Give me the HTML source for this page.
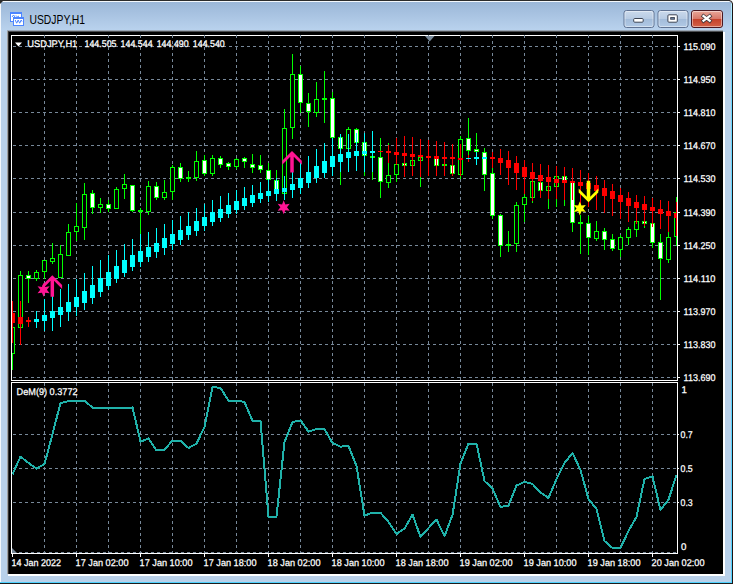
<!DOCTYPE html>
<html><head><meta charset="utf-8"><title>USDJPY,H1</title>
<style>html,body{margin:0;padding:0;background:#fff;overflow:hidden}body{width:735px;height:584px;position:relative;font-family:"Liberation Sans",sans-serif}svg text{font-family:"Liberation Sans",sans-serif}</style></head>
<body>
<svg width="735" height="584" viewBox="0 0 735 584" style="display:block;position:absolute;left:0;top:0">
<defs>
<linearGradient id="tb" x1="0" y1="0" x2="0" y2="1"><stop offset="0" stop-color="#9ab6d7"/><stop offset="1" stop-color="#bad3ee"/></linearGradient>
<linearGradient id="bt" x1="0" y1="0" x2="0" y2="1"><stop offset="0" stop-color="#cbdaec"/><stop offset="0.48" stop-color="#b7cbe3"/><stop offset="0.52" stop-color="#a3bcda"/><stop offset="1" stop-color="#b2cae6"/></linearGradient>
<linearGradient id="cl" x1="0" y1="0" x2="0" y2="1"><stop offset="0" stop-color="#e9a99b"/><stop offset="0.48" stop-color="#d8796a"/><stop offset="0.52" stop-color="#c5422b"/><stop offset="1" stop-color="#d4634a"/></linearGradient>
<linearGradient id="gl" x1="0" y1="0" x2="0" y2="1"><stop offset="0" stop-color="#b9d1ea"/><stop offset="0.4" stop-color="#8a8f96"/><stop offset="1" stop-color="#202020"/></linearGradient>
<linearGradient id="cy" x1="0" y1="0" x2="0" y2="1"><stop offset="0" stop-color="#b8eeff"/><stop offset="0.08" stop-color="#6cd8ff"/><stop offset="1" stop-color="#4fd2ff"/></linearGradient>
<clipPath id="cm"><rect x="12" y="36" width="665" height="344"/></clipPath>
<clipPath id="cs"><rect x="12" y="383" width="665" height="170"/></clipPath>
</defs>
<g shape-rendering="crispEdges">
<rect x="0" y="0" width="735" height="584" fill="#ffffff"/>
<rect x="0" y="0" width="733" height="1" fill="#2b2b2b"/>
<rect x="732" y="0" width="1" height="584" fill="#1c1414"/>
<rect x="0" y="583" width="733" height="1" fill="#1c1c1c"/>
<rect x="731" y="2" width="1" height="581" fill="url(#cy)"/>
<rect x="0" y="582" width="732" height="1" fill="#4fd2ff"/>
<rect x="0" y="1" width="731" height="581" fill="#b9d1ea"/>
<rect x="0" y="1" width="731" height="30" fill="url(#tb)"/>
<rect x="1" y="1" width="730" height="1" fill="#f4f8fc"/>
<rect x="0" y="2" width="1" height="580" fill="#f4f8fc"/>
<rect x="723" y="32" width="2" height="544" fill="#ffffff"/>
<rect x="8" y="574" width="717" height="2" fill="#ffffff"/>
<rect x="7" y="30" width="716" height="2" fill="url(#gl)"/>
<rect x="7" y="31" width="1" height="543" fill="#a0a0a0"/>
<rect x="8" y="31" width="1" height="543" fill="#404040"/>
<rect x="9" y="32" width="714" height="542" fill="#000000"/>
<rect x="8" y="32" width="1" height="542" fill="#303030"/>
</g>
<path d="M0 0H4L0 4Z" fill="#2b2b2b"/>
<path d="M733 0H729L733 4Z" fill="#2b2b2b"/>
<path d="M733 0h2v584h-2z" fill="#ffffff" shape-rendering="crispEdges"/>
<path d="M729 0H735V5H733V4Z" fill="#ffffff"/>
<path d="M729 0.5Q732.5 0.5 732.5 4" stroke="#1c1414" fill="none"/>
<g shape-rendering="crispEdges">
<rect x="10" y="12" width="12" height="10" fill="#4d86ff"/><rect x="11" y="14" width="10" height="7" fill="#ffffff"/>
<rect x="13" y="17" width="11" height="9" fill="#4d86ff"/><rect x="14" y="19" width="9" height="6" fill="#ffffff"/>
</g>
<path d="M12 17l1.5-2 1.5 2M16 15.5l1.5 1.5 1.5-1" stroke="#4d86ff" fill="none" stroke-width="1"/>
<path d="M15.200 20l1.500 3.200 1.500-3.200 1.500 3.200 1.500-3.200 0.800 1.600" stroke="#4d86ff" fill="none" stroke-width="1"/>
<text x="29.5" y="23.8" font-size="12" fill="#000" textLength="55.6" lengthAdjust="spacingAndGlyphs">USDJPY,H1</text>
<rect x="624" y="10.5" width="30" height="17" rx="2.5" ry="2.5" fill="url(#bt)" stroke="#5f7292"/>
<rect x="625" y="11.5" width="28" height="15" rx="1.5" ry="1.5" fill="none" stroke="#ffffff" stroke-opacity="0.45"/>
<rect x="658" y="10.5" width="30" height="17" rx="2.5" ry="2.5" fill="url(#bt)" stroke="#5f7292"/>
<rect x="659" y="11.5" width="28" height="15" rx="1.5" ry="1.5" fill="none" stroke="#ffffff" stroke-opacity="0.45"/>
<rect x="691.5" y="10.5" width="31" height="17" rx="2.5" ry="2.5" fill="url(#cl)" stroke="#4a1822"/>
<rect x="692.5" y="11.5" width="29" height="15" rx="1.5" ry="1.5" fill="none" stroke="#ffffff" stroke-opacity="0.45"/>
<rect x="633.7" y="18.500" width="9.500" height="3.700" rx="1" fill="#ffffff" stroke="#3c4454"/>
<rect x="667.900" y="14.800" width="9.400" height="7.400" rx="1" fill="#ffffff" stroke="#3c4454"/>
<rect x="670.7" y="17.600" width="3.700" height="1.600" fill="#7f9cc4" stroke="#3c4454" stroke-width="1"/>
<path d="M702.000 14.900L711.200 21.900M711.200 14.900L702.000 21.900" stroke="#43383c" stroke-width="3.800" fill="none"/>
<path d="M702.600 15.350L710.600 21.450M710.600 15.350L702.600 21.450" stroke="#ffffff" stroke-width="2.300" fill="none"/>
<g shape-rendering="crispEdges" fill="#ffffff">
<rect x="11" y="35" width="667" height="1"/>
<rect x="11" y="380" width="667" height="1"/>
<rect x="11" y="35" width="1" height="346"/>
<rect x="677" y="35" width="1" height="346"/>
<rect x="11" y="382" width="667" height="1"/>
<rect x="11" y="553" width="667" height="1"/>
<rect x="11" y="382" width="1" height="172"/>
<rect x="677" y="382" width="1" height="172"/>
<rect x="678" y="46" width="2" height="1"/>
<rect x="678" y="79" width="2" height="1"/>
<rect x="678" y="112" width="2" height="1"/>
<rect x="678" y="145" width="2" height="1"/>
<rect x="678" y="178" width="2" height="1"/>
<rect x="678" y="212" width="2" height="1"/>
<rect x="678" y="245" width="2" height="1"/>
<rect x="678" y="278" width="2" height="1"/>
<rect x="678" y="311" width="2" height="1"/>
<rect x="678" y="344" width="2" height="1"/>
<rect x="678" y="377" width="2" height="1"/>
<rect x="678" y="434" width="1" height="1"/>
<rect x="678" y="468" width="1" height="1"/>
<rect x="678" y="502" width="1" height="1"/>
<rect x="12" y="554" width="1" height="3"/>
<rect x="76" y="554" width="1" height="3"/>
<rect x="140" y="554" width="1" height="3"/>
<rect x="204" y="554" width="1" height="3"/>
<rect x="268" y="554" width="1" height="3"/>
<rect x="332" y="554" width="1" height="3"/>
<rect x="396" y="554" width="1" height="3"/>
<rect x="460" y="554" width="1" height="3"/>
<rect x="524" y="554" width="1" height="3"/>
<rect x="588" y="554" width="1" height="3"/>
<rect x="652" y="554" width="1" height="3"/>
</g>
<g shape-rendering="crispEdges" stroke="#778899" stroke-width="1" stroke-dasharray="3 3" fill="none">
<path d="M13 46.5H677"/>
<path d="M13 79.5H677"/>
<path d="M13 112.5H677"/>
<path d="M13 145.5H677"/>
<path d="M13 178.5H677"/>
<path d="M13 212.5H677"/>
<path d="M13 245.5H677"/>
<path d="M13 278.5H677"/>
<path d="M13 311.5H677"/>
<path d="M13 344.5H677"/>
<path d="M13 377.5H677"/>
<path d="M13 434.5H677"/>
<path d="M13 468.5H677"/>
<path d="M13 502.5H677"/>
<path d="M13 552.5H677"/>
<path d="M44.5 35V380"/>
<path d="M44.5 383V553"/>
<path d="M76.5 35V380"/>
<path d="M76.5 383V553"/>
<path d="M108.5 35V380"/>
<path d="M108.5 383V553"/>
<path d="M140.5 35V380"/>
<path d="M140.5 383V553"/>
<path d="M172.5 35V380"/>
<path d="M172.5 383V553"/>
<path d="M204.5 35V380"/>
<path d="M204.5 383V553"/>
<path d="M236.5 35V380"/>
<path d="M236.5 383V553"/>
<path d="M268.5 35V380"/>
<path d="M268.5 383V553"/>
<path d="M300.5 35V380"/>
<path d="M300.5 383V553"/>
<path d="M332.5 35V380"/>
<path d="M332.5 383V553"/>
<path d="M364.5 35V380"/>
<path d="M364.5 383V553"/>
<path d="M396.5 35V380"/>
<path d="M396.5 383V553"/>
<path d="M428.5 35V380"/>
<path d="M428.5 383V553"/>
<path d="M460.5 35V380"/>
<path d="M460.5 383V553"/>
<path d="M492.5 35V380"/>
<path d="M492.5 383V553"/>
<path d="M524.5 35V380"/>
<path d="M524.5 383V553"/>
<path d="M556.5 35V380"/>
<path d="M556.5 383V553"/>
<path d="M588.5 35V380"/>
<path d="M588.5 383V553"/>
<path d="M620.5 35V380"/>
<path d="M620.5 383V553"/>
<path d="M652.5 35V380"/>
<path d="M652.5 383V553"/>
</g>
<path d="M425 36H434.500L429.700 41.500Z" fill="#778899"/>
<path d="M12 548L17 553H12Z" fill="#778899"/>
<g shape-rendering="crispEdges" clip-path="url(#cm)">
<rect x="12" y="327" width="1" height="43" fill="#00ff00"/>
<rect x="10" y="327" width="5" height="27" fill="#00ff00"/>
<rect x="11" y="328" width="3" height="25" fill="#000000"/>
<rect x="20" y="271" width="1" height="57" fill="#00ff00"/>
<rect x="18" y="275" width="5" height="53" fill="#00ff00"/>
<rect x="19" y="276" width="3" height="51" fill="#000000"/>
<rect x="28" y="271" width="1" height="32" fill="#00ff00"/>
<rect x="26" y="275" width="5" height="4" fill="#00ff00"/>
<rect x="27" y="276" width="3" height="2" fill="#ffffff"/>
<rect x="36" y="270" width="1" height="11" fill="#00ff00"/>
<rect x="34" y="272" width="5" height="7" fill="#00ff00"/>
<rect x="35" y="273" width="3" height="5" fill="#000000"/>
<rect x="44" y="260" width="1" height="19" fill="#00ff00"/>
<rect x="42" y="260" width="5" height="12" fill="#00ff00"/>
<rect x="43" y="261" width="3" height="10" fill="#000000"/>
<rect x="52" y="243" width="1" height="21" fill="#00ff00"/>
<rect x="50" y="258" width="5" height="4" fill="#00ff00"/>
<rect x="51" y="259" width="3" height="2" fill="#000000"/>
<rect x="60" y="245" width="1" height="33" fill="#00ff00"/>
<rect x="58" y="254" width="5" height="24" fill="#00ff00"/>
<rect x="59" y="255" width="3" height="22" fill="#000000"/>
<rect x="68" y="224" width="1" height="32" fill="#00ff00"/>
<rect x="66" y="232" width="5" height="24" fill="#00ff00"/>
<rect x="67" y="233" width="3" height="22" fill="#000000"/>
<rect x="76" y="203" width="1" height="38" fill="#00ff00"/>
<rect x="74" y="226" width="5" height="6" fill="#00ff00"/>
<rect x="75" y="227" width="3" height="4" fill="#000000"/>
<rect x="84" y="183" width="1" height="57" fill="#00ff00"/>
<rect x="82" y="194" width="5" height="34" fill="#00ff00"/>
<rect x="83" y="195" width="3" height="32" fill="#000000"/>
<rect x="92" y="190" width="1" height="24" fill="#00ff00"/>
<rect x="90" y="193" width="5" height="15" fill="#00ff00"/>
<rect x="91" y="194" width="3" height="13" fill="#ffffff"/>
<rect x="100" y="198" width="1" height="15" fill="#00ff00"/>
<rect x="98" y="204" width="5" height="4" fill="#00ff00"/>
<rect x="99" y="205" width="3" height="2" fill="#000000"/>
<rect x="108" y="200" width="1" height="12" fill="#00ff00"/>
<rect x="106" y="204" width="5" height="5" fill="#00ff00"/>
<rect x="107" y="205" width="3" height="3" fill="#ffffff"/>
<rect x="116" y="187" width="1" height="22" fill="#00ff00"/>
<rect x="114" y="189" width="5" height="20" fill="#00ff00"/>
<rect x="115" y="190" width="3" height="18" fill="#000000"/>
<rect x="124" y="174" width="1" height="25" fill="#00ff00"/>
<rect x="122" y="184" width="5" height="5" fill="#00ff00"/>
<rect x="123" y="185" width="3" height="3" fill="#000000"/>
<rect x="132" y="185" width="1" height="27" fill="#00ff00"/>
<rect x="130" y="185" width="5" height="26" fill="#00ff00"/>
<rect x="131" y="186" width="3" height="24" fill="#ffffff"/>
<rect x="140" y="208" width="1" height="27" fill="#00ff00"/>
<rect x="138" y="210" width="5" height="2" fill="#00ff00"/>
<rect x="148" y="181" width="1" height="34" fill="#00ff00"/>
<rect x="146" y="186" width="5" height="26" fill="#00ff00"/>
<rect x="147" y="187" width="3" height="24" fill="#000000"/>
<rect x="156" y="182" width="1" height="18" fill="#00ff00"/>
<rect x="154" y="186" width="5" height="12" fill="#00ff00"/>
<rect x="155" y="187" width="3" height="10" fill="#ffffff"/>
<rect x="164" y="180" width="1" height="20" fill="#00ff00"/>
<rect x="162" y="192" width="5" height="6" fill="#00ff00"/>
<rect x="163" y="193" width="3" height="4" fill="#000000"/>
<rect x="172" y="165" width="1" height="35" fill="#00ff00"/>
<rect x="170" y="167" width="5" height="25" fill="#00ff00"/>
<rect x="171" y="168" width="3" height="23" fill="#000000"/>
<rect x="180" y="163" width="1" height="19" fill="#00ff00"/>
<rect x="178" y="167" width="5" height="12" fill="#00ff00"/>
<rect x="179" y="168" width="3" height="10" fill="#ffffff"/>
<rect x="188" y="171" width="1" height="11" fill="#00ff00"/>
<rect x="186" y="177" width="5" height="2" fill="#00ff00"/>
<rect x="196" y="151" width="1" height="30" fill="#00ff00"/>
<rect x="194" y="161" width="5" height="17" fill="#00ff00"/>
<rect x="195" y="162" width="3" height="15" fill="#000000"/>
<rect x="204" y="155" width="1" height="21" fill="#00ff00"/>
<rect x="202" y="160" width="5" height="14" fill="#00ff00"/>
<rect x="203" y="161" width="3" height="12" fill="#ffffff"/>
<rect x="212" y="155" width="1" height="21" fill="#00ff00"/>
<rect x="210" y="158" width="5" height="16" fill="#00ff00"/>
<rect x="211" y="159" width="3" height="14" fill="#000000"/>
<rect x="220" y="156" width="1" height="12" fill="#00ff00"/>
<rect x="218" y="158" width="5" height="7" fill="#00ff00"/>
<rect x="219" y="159" width="3" height="5" fill="#ffffff"/>
<rect x="228" y="162" width="1" height="8" fill="#00ff00"/>
<rect x="226" y="163" width="5" height="4" fill="#00ff00"/>
<rect x="227" y="164" width="3" height="2" fill="#ffffff"/>
<rect x="236" y="158" width="1" height="11" fill="#00ff00"/>
<rect x="234" y="159" width="5" height="8" fill="#00ff00"/>
<rect x="235" y="160" width="3" height="6" fill="#000000"/>
<rect x="244" y="157" width="1" height="11" fill="#00ff00"/>
<rect x="242" y="158" width="5" height="4" fill="#00ff00"/>
<rect x="243" y="159" width="3" height="2" fill="#ffffff"/>
<rect x="252" y="154" width="1" height="19" fill="#00ff00"/>
<rect x="250" y="164" width="5" height="4" fill="#00ff00"/>
<rect x="251" y="165" width="3" height="2" fill="#ffffff"/>
<rect x="260" y="155" width="1" height="18" fill="#00ff00"/>
<rect x="258" y="165" width="5" height="5" fill="#00ff00"/>
<rect x="259" y="166" width="3" height="3" fill="#ffffff"/>
<rect x="268" y="163" width="1" height="19" fill="#00ff00"/>
<rect x="266" y="170" width="5" height="10" fill="#00ff00"/>
<rect x="267" y="171" width="3" height="8" fill="#ffffff"/>
<rect x="276" y="170" width="1" height="22" fill="#00ff00"/>
<rect x="274" y="180" width="5" height="10" fill="#00ff00"/>
<rect x="275" y="181" width="3" height="8" fill="#ffffff"/>
<rect x="284" y="109" width="1" height="91" fill="#00ff00"/>
<rect x="282" y="128" width="5" height="66" fill="#00ff00"/>
<rect x="283" y="129" width="3" height="64" fill="#000000"/>
<rect x="292" y="54" width="1" height="85" fill="#00ff00"/>
<rect x="290" y="74" width="5" height="54" fill="#00ff00"/>
<rect x="291" y="75" width="3" height="52" fill="#000000"/>
<rect x="300" y="66" width="1" height="47" fill="#00ff00"/>
<rect x="298" y="74" width="5" height="29" fill="#00ff00"/>
<rect x="299" y="75" width="3" height="27" fill="#ffffff"/>
<rect x="308" y="93" width="1" height="34" fill="#00ff00"/>
<rect x="306" y="103" width="5" height="9" fill="#00ff00"/>
<rect x="307" y="104" width="3" height="7" fill="#ffffff"/>
<rect x="316" y="82" width="1" height="35" fill="#00ff00"/>
<rect x="314" y="99" width="5" height="14" fill="#00ff00"/>
<rect x="315" y="100" width="3" height="12" fill="#000000"/>
<rect x="324" y="71" width="1" height="52" fill="#00ff00"/>
<rect x="322" y="98" width="5" height="2" fill="#00ff00"/>
<rect x="332" y="92" width="1" height="48" fill="#00ff00"/>
<rect x="330" y="98" width="5" height="40" fill="#00ff00"/>
<rect x="331" y="99" width="3" height="38" fill="#ffffff"/>
<rect x="340" y="134" width="1" height="51" fill="#00ff00"/>
<rect x="338" y="137" width="5" height="12" fill="#00ff00"/>
<rect x="339" y="138" width="3" height="10" fill="#ffffff"/>
<rect x="348" y="127" width="1" height="25" fill="#00ff00"/>
<rect x="346" y="129" width="5" height="20" fill="#00ff00"/>
<rect x="347" y="130" width="3" height="18" fill="#000000"/>
<rect x="356" y="128" width="1" height="22" fill="#00ff00"/>
<rect x="354" y="129" width="5" height="14" fill="#00ff00"/>
<rect x="355" y="130" width="3" height="12" fill="#ffffff"/>
<rect x="364" y="142" width="1" height="34" fill="#00ff00"/>
<rect x="362" y="142" width="5" height="14" fill="#00ff00"/>
<rect x="363" y="143" width="3" height="12" fill="#ffffff"/>
<rect x="372" y="150" width="1" height="30" fill="#00ff00"/>
<rect x="370" y="156" width="5" height="2" fill="#00ff00"/>
<rect x="380" y="138" width="1" height="60" fill="#00ff00"/>
<rect x="378" y="157" width="5" height="25" fill="#00ff00"/>
<rect x="379" y="158" width="3" height="23" fill="#ffffff"/>
<rect x="388" y="143" width="1" height="45" fill="#00ff00"/>
<rect x="386" y="175" width="5" height="8" fill="#00ff00"/>
<rect x="387" y="176" width="3" height="6" fill="#000000"/>
<rect x="396" y="150" width="1" height="32" fill="#00ff00"/>
<rect x="394" y="164" width="5" height="11" fill="#00ff00"/>
<rect x="395" y="165" width="3" height="9" fill="#000000"/>
<rect x="404" y="155" width="1" height="15" fill="#00ff00"/>
<rect x="402" y="163" width="5" height="3" fill="#00ff00"/>
<rect x="403" y="164" width="3" height="1" fill="#ffffff"/>
<rect x="412" y="155" width="1" height="15" fill="#00ff00"/>
<rect x="410" y="160" width="5" height="6" fill="#00ff00"/>
<rect x="411" y="161" width="3" height="4" fill="#000000"/>
<rect x="420" y="150" width="1" height="37" fill="#00ff00"/>
<rect x="418" y="157" width="5" height="4" fill="#00ff00"/>
<rect x="419" y="158" width="3" height="2" fill="#000000"/>
<rect x="428" y="155" width="1" height="15" fill="#00ff00"/>
<rect x="426" y="157" width="5" height="1" fill="#00ff00"/>
<rect x="436" y="156" width="1" height="12" fill="#00ff00"/>
<rect x="434" y="158" width="5" height="8" fill="#00ff00"/>
<rect x="435" y="159" width="3" height="6" fill="#ffffff"/>
<rect x="444" y="160" width="1" height="8" fill="#00ff00"/>
<rect x="442" y="164" width="5" height="2" fill="#00ff00"/>
<rect x="452" y="160" width="1" height="15" fill="#00ff00"/>
<rect x="450" y="165" width="5" height="9" fill="#00ff00"/>
<rect x="451" y="166" width="3" height="7" fill="#ffffff"/>
<rect x="460" y="136" width="1" height="43" fill="#00ff00"/>
<rect x="458" y="139" width="5" height="36" fill="#00ff00"/>
<rect x="459" y="140" width="3" height="34" fill="#000000"/>
<rect x="468" y="118" width="1" height="38" fill="#00ff00"/>
<rect x="466" y="138" width="5" height="13" fill="#00ff00"/>
<rect x="467" y="139" width="3" height="11" fill="#ffffff"/>
<rect x="476" y="133" width="1" height="22" fill="#00ff00"/>
<rect x="474" y="149" width="5" height="3" fill="#00ff00"/>
<rect x="475" y="150" width="3" height="1" fill="#ffffff"/>
<rect x="484" y="148" width="1" height="43" fill="#00ff00"/>
<rect x="482" y="152" width="5" height="23" fill="#00ff00"/>
<rect x="483" y="153" width="3" height="21" fill="#ffffff"/>
<rect x="492" y="168" width="1" height="51" fill="#00ff00"/>
<rect x="490" y="173" width="5" height="43" fill="#00ff00"/>
<rect x="491" y="174" width="3" height="41" fill="#ffffff"/>
<rect x="500" y="214" width="1" height="43" fill="#00ff00"/>
<rect x="498" y="215" width="5" height="31" fill="#00ff00"/>
<rect x="499" y="216" width="3" height="29" fill="#ffffff"/>
<rect x="508" y="231" width="1" height="21" fill="#00ff00"/>
<rect x="506" y="244" width="5" height="2" fill="#00ff00"/>
<rect x="516" y="202" width="1" height="50" fill="#00ff00"/>
<rect x="514" y="205" width="5" height="39" fill="#00ff00"/>
<rect x="515" y="206" width="3" height="37" fill="#000000"/>
<rect x="524" y="193" width="1" height="29" fill="#00ff00"/>
<rect x="522" y="197" width="5" height="8" fill="#00ff00"/>
<rect x="523" y="198" width="3" height="6" fill="#000000"/>
<rect x="532" y="175" width="1" height="28" fill="#00ff00"/>
<rect x="530" y="181" width="5" height="17" fill="#00ff00"/>
<rect x="531" y="182" width="3" height="15" fill="#000000"/>
<rect x="540" y="178" width="1" height="18" fill="#00ff00"/>
<rect x="538" y="182" width="5" height="9" fill="#00ff00"/>
<rect x="539" y="183" width="3" height="7" fill="#ffffff"/>
<rect x="548" y="180" width="1" height="29" fill="#00ff00"/>
<rect x="546" y="186" width="5" height="5" fill="#00ff00"/>
<rect x="547" y="187" width="3" height="3" fill="#000000"/>
<rect x="556" y="172" width="1" height="35" fill="#00ff00"/>
<rect x="554" y="176" width="5" height="11" fill="#00ff00"/>
<rect x="555" y="177" width="3" height="9" fill="#000000"/>
<rect x="564" y="172" width="1" height="34" fill="#00ff00"/>
<rect x="562" y="176" width="5" height="7" fill="#00ff00"/>
<rect x="563" y="177" width="3" height="5" fill="#ffffff"/>
<rect x="572" y="180" width="1" height="52" fill="#00ff00"/>
<rect x="570" y="182" width="5" height="41" fill="#00ff00"/>
<rect x="571" y="183" width="3" height="39" fill="#ffffff"/>
<rect x="580" y="215" width="1" height="39" fill="#00ff00"/>
<rect x="578" y="222" width="5" height="2" fill="#00ff00"/>
<rect x="588" y="216" width="1" height="39" fill="#00ff00"/>
<rect x="586" y="223" width="5" height="15" fill="#00ff00"/>
<rect x="587" y="224" width="3" height="13" fill="#ffffff"/>
<rect x="596" y="221" width="1" height="20" fill="#00ff00"/>
<rect x="594" y="231" width="5" height="8" fill="#00ff00"/>
<rect x="595" y="232" width="3" height="6" fill="#000000"/>
<rect x="604" y="228" width="1" height="22" fill="#00ff00"/>
<rect x="602" y="231" width="5" height="9" fill="#00ff00"/>
<rect x="603" y="232" width="3" height="7" fill="#ffffff"/>
<rect x="612" y="234" width="1" height="17" fill="#00ff00"/>
<rect x="610" y="239" width="5" height="10" fill="#00ff00"/>
<rect x="611" y="240" width="3" height="8" fill="#ffffff"/>
<rect x="620" y="235" width="1" height="22" fill="#00ff00"/>
<rect x="618" y="237" width="5" height="13" fill="#00ff00"/>
<rect x="619" y="238" width="3" height="11" fill="#000000"/>
<rect x="628" y="227" width="1" height="18" fill="#00ff00"/>
<rect x="626" y="229" width="5" height="9" fill="#00ff00"/>
<rect x="627" y="230" width="3" height="7" fill="#000000"/>
<rect x="636" y="218" width="1" height="19" fill="#00ff00"/>
<rect x="634" y="221" width="5" height="9" fill="#00ff00"/>
<rect x="635" y="222" width="3" height="7" fill="#000000"/>
<rect x="644" y="218" width="1" height="10" fill="#00ff00"/>
<rect x="642" y="221" width="5" height="3" fill="#00ff00"/>
<rect x="643" y="222" width="3" height="1" fill="#ffffff"/>
<rect x="652" y="220" width="1" height="28" fill="#00ff00"/>
<rect x="650" y="223" width="5" height="20" fill="#00ff00"/>
<rect x="651" y="224" width="3" height="18" fill="#ffffff"/>
<rect x="660" y="234" width="1" height="66" fill="#00ff00"/>
<rect x="658" y="242" width="5" height="17" fill="#00ff00"/>
<rect x="659" y="243" width="3" height="15" fill="#ffffff"/>
<rect x="668" y="232" width="1" height="31" fill="#00ff00"/>
<rect x="666" y="237" width="5" height="23" fill="#00ff00"/>
<rect x="667" y="238" width="3" height="21" fill="#000000"/>
<rect x="676" y="197" width="1" height="49" fill="#00ff00"/>
<rect x="674" y="212" width="5" height="25" fill="#00ff00"/>
<rect x="675" y="213" width="3" height="23" fill="#000000"/>
<rect x="12" y="301" width="1" height="42" fill="#ff0000"/>
<rect x="10" y="313" width="5" height="10" fill="#ff0000"/>
<rect x="20" y="301" width="1" height="44" fill="#ff0000"/>
<rect x="18" y="317" width="5" height="7" fill="#ff0000"/>
<rect x="28" y="317" width="1" height="10" fill="#ff0000"/>
<rect x="26" y="320" width="5" height="2" fill="#ff0000"/>
<rect x="36" y="311" width="1" height="17" fill="#00ffff"/>
<rect x="34" y="319" width="5" height="3" fill="#00ffff"/>
<rect x="44" y="299" width="1" height="32" fill="#00ffff"/>
<rect x="42" y="315" width="5" height="6" fill="#00ffff"/>
<rect x="52" y="293" width="1" height="38" fill="#00ffff"/>
<rect x="50" y="311" width="5" height="7" fill="#00ffff"/>
<rect x="60" y="289" width="1" height="38" fill="#00ffff"/>
<rect x="58" y="307" width="5" height="8" fill="#00ffff"/>
<rect x="68" y="284" width="1" height="37" fill="#00ffff"/>
<rect x="66" y="302" width="5" height="10" fill="#00ffff"/>
<rect x="76" y="279" width="1" height="37" fill="#00ffff"/>
<rect x="74" y="297" width="5" height="10" fill="#00ffff"/>
<rect x="84" y="273" width="1" height="37" fill="#00ffff"/>
<rect x="82" y="291" width="5" height="12" fill="#00ffff"/>
<rect x="92" y="266" width="1" height="38" fill="#00ffff"/>
<rect x="90" y="285" width="5" height="13" fill="#00ffff"/>
<rect x="100" y="260" width="1" height="37" fill="#00ffff"/>
<rect x="98" y="278" width="5" height="14" fill="#00ffff"/>
<rect x="108" y="255" width="1" height="35" fill="#00ffff"/>
<rect x="106" y="272" width="5" height="14" fill="#00ffff"/>
<rect x="116" y="250" width="1" height="33" fill="#00ffff"/>
<rect x="114" y="266" width="5" height="13" fill="#00ffff"/>
<rect x="124" y="244" width="1" height="33" fill="#00ffff"/>
<rect x="122" y="260" width="5" height="13" fill="#00ffff"/>
<rect x="132" y="239" width="1" height="32" fill="#00ffff"/>
<rect x="130" y="255" width="5" height="12" fill="#00ffff"/>
<rect x="140" y="234" width="1" height="33" fill="#00ffff"/>
<rect x="138" y="251" width="5" height="11" fill="#00ffff"/>
<rect x="148" y="232" width="1" height="30" fill="#00ffff"/>
<rect x="146" y="247" width="5" height="10" fill="#00ffff"/>
<rect x="156" y="228" width="1" height="30" fill="#00ffff"/>
<rect x="154" y="243" width="5" height="9" fill="#00ffff"/>
<rect x="164" y="224" width="1" height="31" fill="#00ffff"/>
<rect x="162" y="238" width="5" height="10" fill="#00ffff"/>
<rect x="172" y="220" width="1" height="30" fill="#00ffff"/>
<rect x="170" y="234" width="5" height="10" fill="#00ffff"/>
<rect x="180" y="216" width="1" height="29" fill="#00ffff"/>
<rect x="178" y="230" width="5" height="10" fill="#00ffff"/>
<rect x="188" y="212" width="1" height="28" fill="#00ffff"/>
<rect x="186" y="226" width="5" height="9" fill="#00ffff"/>
<rect x="196" y="208" width="1" height="28" fill="#00ffff"/>
<rect x="194" y="221" width="5" height="10" fill="#00ffff"/>
<rect x="204" y="204" width="1" height="27" fill="#00ffff"/>
<rect x="202" y="217" width="5" height="9" fill="#00ffff"/>
<rect x="212" y="200" width="1" height="26" fill="#00ffff"/>
<rect x="210" y="212" width="5" height="10" fill="#00ffff"/>
<rect x="220" y="196" width="1" height="26" fill="#00ffff"/>
<rect x="218" y="209" width="5" height="9" fill="#00ffff"/>
<rect x="228" y="193" width="1" height="25" fill="#00ffff"/>
<rect x="226" y="205" width="5" height="9" fill="#00ffff"/>
<rect x="236" y="190" width="1" height="24" fill="#00ffff"/>
<rect x="234" y="201" width="5" height="9" fill="#00ffff"/>
<rect x="244" y="187" width="1" height="23" fill="#00ffff"/>
<rect x="242" y="198" width="5" height="8" fill="#00ffff"/>
<rect x="252" y="185" width="1" height="22" fill="#00ffff"/>
<rect x="250" y="195" width="5" height="8" fill="#00ffff"/>
<rect x="260" y="182" width="1" height="21" fill="#00ffff"/>
<rect x="258" y="193" width="5" height="6" fill="#00ffff"/>
<rect x="268" y="179" width="1" height="23" fill="#00ffff"/>
<rect x="266" y="191" width="5" height="5" fill="#00ffff"/>
<rect x="276" y="178" width="1" height="23" fill="#00ffff"/>
<rect x="274" y="189" width="5" height="5" fill="#00ffff"/>
<rect x="284" y="176" width="1" height="24" fill="#00ffff"/>
<rect x="282" y="188" width="5" height="4" fill="#00ffff"/>
<rect x="292" y="170" width="1" height="28" fill="#00ffff"/>
<rect x="290" y="184" width="5" height="6" fill="#00ffff"/>
<rect x="300" y="163" width="1" height="31" fill="#00ffff"/>
<rect x="298" y="178" width="5" height="10" fill="#00ffff"/>
<rect x="308" y="156" width="1" height="32" fill="#00ffff"/>
<rect x="306" y="172" width="5" height="11" fill="#00ffff"/>
<rect x="316" y="149" width="1" height="34" fill="#00ffff"/>
<rect x="314" y="166" width="5" height="12" fill="#00ffff"/>
<rect x="324" y="143" width="1" height="35" fill="#00ffff"/>
<rect x="322" y="161" width="5" height="12" fill="#00ffff"/>
<rect x="332" y="138" width="1" height="38" fill="#00ffff"/>
<rect x="330" y="156" width="5" height="11" fill="#00ffff"/>
<rect x="340" y="134" width="1" height="38" fill="#00ffff"/>
<rect x="338" y="154" width="5" height="8" fill="#00ffff"/>
<rect x="348" y="134" width="1" height="38" fill="#00ffff"/>
<rect x="346" y="152" width="5" height="6" fill="#00ffff"/>
<rect x="356" y="133" width="1" height="38" fill="#00ffff"/>
<rect x="354" y="151" width="5" height="5" fill="#00ffff"/>
<rect x="364" y="133" width="1" height="39" fill="#00ffff"/>
<rect x="362" y="151" width="5" height="3" fill="#00ffff"/>
<rect x="372" y="131" width="1" height="41" fill="#00ffff"/>
<rect x="370" y="151" width="5" height="2" fill="#00ffff"/>
<rect x="380" y="151" width="1" height="1" fill="#ff0000"/>
<rect x="378" y="151" width="5" height="1" fill="#ff0000"/>
<rect x="388" y="145" width="1" height="18" fill="#ff0000"/>
<rect x="386" y="151" width="5" height="2" fill="#ff0000"/>
<rect x="396" y="138" width="1" height="27" fill="#ff0000"/>
<rect x="394" y="152" width="5" height="3" fill="#ff0000"/>
<rect x="404" y="136" width="1" height="41" fill="#ff0000"/>
<rect x="402" y="153" width="5" height="3" fill="#ff0000"/>
<rect x="412" y="137" width="1" height="39" fill="#ff0000"/>
<rect x="410" y="154" width="5" height="3" fill="#ff0000"/>
<rect x="420" y="139" width="1" height="38" fill="#ff0000"/>
<rect x="418" y="155" width="5" height="2" fill="#ff0000"/>
<rect x="428" y="140" width="1" height="36" fill="#ff0000"/>
<rect x="426" y="156" width="5" height="2" fill="#ff0000"/>
<rect x="436" y="141" width="1" height="35" fill="#ff0000"/>
<rect x="434" y="156" width="5" height="3" fill="#ff0000"/>
<rect x="444" y="142" width="1" height="34" fill="#ff0000"/>
<rect x="442" y="157" width="5" height="2" fill="#ff0000"/>
<rect x="452" y="144" width="1" height="32" fill="#ff0000"/>
<rect x="450" y="157" width="5" height="2" fill="#ff0000"/>
<rect x="460" y="144" width="1" height="32" fill="#ff0000"/>
<rect x="458" y="158" width="5" height="2" fill="#ff0000"/>
<rect x="468" y="155" width="1" height="7" fill="#ff0000"/>
<rect x="466" y="158" width="5" height="1" fill="#00ffff"/>
<rect x="476" y="152" width="1" height="13" fill="#00ffff"/>
<rect x="474" y="157" width="5" height="2" fill="#00ffff"/>
<rect x="484" y="157" width="1" height="2" fill="#00ffff"/>
<rect x="482" y="157" width="5" height="2" fill="#00ffff"/>
<rect x="492" y="152" width="1" height="16" fill="#ff0000"/>
<rect x="490" y="157" width="5" height="2" fill="#ff0000"/>
<rect x="500" y="149" width="1" height="26" fill="#ff0000"/>
<rect x="498" y="158" width="5" height="5" fill="#ff0000"/>
<rect x="508" y="151" width="1" height="34" fill="#ff0000"/>
<rect x="506" y="160" width="5" height="8" fill="#ff0000"/>
<rect x="516" y="156" width="1" height="34" fill="#ff0000"/>
<rect x="514" y="163" width="5" height="10" fill="#ff0000"/>
<rect x="524" y="160" width="1" height="34" fill="#ff0000"/>
<rect x="522" y="167" width="5" height="10" fill="#ff0000"/>
<rect x="532" y="163" width="1" height="38" fill="#ff0000"/>
<rect x="530" y="172" width="5" height="7" fill="#ff0000"/>
<rect x="540" y="164" width="1" height="34" fill="#ff0000"/>
<rect x="538" y="175" width="5" height="6" fill="#ff0000"/>
<rect x="548" y="165" width="1" height="34" fill="#ff0000"/>
<rect x="546" y="177" width="5" height="5" fill="#ff0000"/>
<rect x="556" y="166" width="1" height="33" fill="#ff0000"/>
<rect x="554" y="179" width="5" height="4" fill="#ff0000"/>
<rect x="564" y="167" width="1" height="33" fill="#ff0000"/>
<rect x="562" y="180" width="5" height="3" fill="#ff0000"/>
<rect x="572" y="168" width="1" height="32" fill="#ff0000"/>
<rect x="570" y="181" width="5" height="2" fill="#ff0000"/>
<rect x="580" y="170" width="1" height="35" fill="#ff0000"/>
<rect x="578" y="182" width="5" height="4" fill="#ff0000"/>
<rect x="588" y="173" width="1" height="34" fill="#ff0000"/>
<rect x="586" y="183" width="5" height="6" fill="#ff0000"/>
<rect x="596" y="176" width="1" height="34" fill="#ff0000"/>
<rect x="594" y="185" width="5" height="6" fill="#ff0000"/>
<rect x="604" y="180" width="1" height="33" fill="#ff0000"/>
<rect x="602" y="188" width="5" height="8" fill="#ff0000"/>
<rect x="612" y="184" width="1" height="32" fill="#ff0000"/>
<rect x="610" y="191" width="5" height="8" fill="#ff0000"/>
<rect x="620" y="188" width="1" height="31" fill="#ff0000"/>
<rect x="618" y="195" width="5" height="7" fill="#ff0000"/>
<rect x="628" y="192" width="1" height="30" fill="#ff0000"/>
<rect x="626" y="198" width="5" height="8" fill="#ff0000"/>
<rect x="636" y="195" width="1" height="29" fill="#ff0000"/>
<rect x="634" y="202" width="5" height="6" fill="#ff0000"/>
<rect x="644" y="196" width="1" height="30" fill="#ff0000"/>
<rect x="642" y="204" width="5" height="6" fill="#ff0000"/>
<rect x="652" y="198" width="1" height="29" fill="#ff0000"/>
<rect x="650" y="207" width="5" height="4" fill="#ff0000"/>
<rect x="660" y="200" width="1" height="29" fill="#ff0000"/>
<rect x="658" y="209" width="5" height="5" fill="#ff0000"/>
<rect x="668" y="201" width="1" height="31" fill="#ff0000"/>
<rect x="666" y="211" width="5" height="5" fill="#ff0000"/>
<rect x="676" y="202" width="1" height="34" fill="#ff0000"/>
<rect x="674" y="213" width="5" height="5" fill="#ff0000"/>
</g>
<polygon points="52.30,275.20 62.10,285.00 62.10,288.90 54.05,280.85 54.05,296.70 50.55,296.70 50.55,280.85 42.50,288.90 42.50,285.00" fill="#ff1493"/>
<polygon points="43.60,282.80 45.25,286.94 49.66,286.30 46.90,289.80 49.66,293.30 45.25,292.66 43.60,296.80 41.95,292.66 37.54,293.30 40.30,289.80 37.54,286.30 41.95,286.94" fill="#ff1493"/>
<polygon points="292.00,151.00 301.80,160.80 301.80,164.70 293.75,156.65 293.75,172.50 290.25,172.50 290.25,156.65 282.20,164.70 282.20,160.80" fill="#ff1493"/>
<polygon points="283.70,200.30 285.35,204.44 289.76,203.80 287.00,207.30 289.76,210.80 285.35,210.16 283.70,214.30 282.05,210.16 277.64,210.80 280.40,207.30 277.64,203.80 282.05,204.44" fill="#ff1493"/>
<polygon points="588.50,202.30 598.30,192.50 598.30,188.60 590.25,196.65 590.25,180.80 586.75,180.80 586.75,196.65 578.70,188.60 578.70,192.50" fill="#ffff00"/>
<polygon points="579.80,201.40 581.45,205.54 585.86,204.90 583.10,208.40 585.86,211.90 581.45,211.26 579.80,215.40 578.15,211.26 573.74,211.90 576.50,208.40 573.74,204.90 578.15,205.54" fill="#ffff00"/>
<polyline clip-path="url(#cs)" points="12.5,474.4 20.5,456.6 28.5,463.0 36.5,468.6 44.5,464.0 52.5,434.0 60.5,403.0 68.5,401.2 76.5,400.6 84.5,400.6 92.5,407.6 100.5,407.6 108.5,407.6 116.5,408.4 124.5,408.4 132.5,407.4 140.5,441.6 148.5,438.5 156.5,450.4 164.5,449.6 172.5,440.6 180.5,440.6 188.5,448.0 196.5,443.6 204.5,427.0 212.5,387.0 220.5,388.0 228.5,400.6 236.5,400.6 244.5,402.0 252.5,420.8 260.5,420.8 268.5,516.6 276.5,516.6 284.5,442.0 292.5,422.0 300.5,420.4 308.5,431.6 316.5,429.0 324.5,429.0 332.5,443.0 340.5,446.6 348.5,446.0 356.5,466.0 364.5,515.6 372.5,512.6 380.5,512.8 388.5,522.0 396.5,534.0 404.5,528.6 412.5,514.6 420.5,537.0 428.5,528.0 436.5,519.6 444.5,536.0 452.5,515.0 460.5,463.6 468.5,443.6 476.5,443.6 484.5,481.0 492.5,488.6 500.5,507.0 508.5,505.6 516.5,485.6 524.5,481.8 532.5,484.0 540.5,492.4 548.5,498.0 556.5,479.0 564.5,463.0 572.5,453.0 580.5,470.0 588.5,499.0 596.5,509.0 604.5,541.0 612.5,548.0 620.5,548.0 628.5,531.0 636.5,517.0 644.5,479.0 652.5,476.4 660.5,510.0 668.5,499.6 676.5,475.0" fill="none" stroke="#20b2aa" stroke-width="2" stroke-linejoin="round" shape-rendering="crispEdges"/>
<g font-size="9.7" fill="#ffffff" stroke="#ffffff" stroke-width="0.25" style="text-rendering:geometricPrecision">
<path d="M15 42.500H22L18.500 46.500Z" fill="#ffffff" stroke="none"/>
<text x="27.3" y="47" textLength="50" lengthAdjust="spacingAndGlyphs">USDJPY,H1</text>
<text x="84.5" y="47" textLength="32" lengthAdjust="spacingAndGlyphs">144.505</text>
<text x="120.6" y="47" textLength="32" lengthAdjust="spacingAndGlyphs">144.544</text>
<text x="156.7" y="47" textLength="32" lengthAdjust="spacingAndGlyphs">144.490</text>
<text x="192.8" y="47" textLength="32" lengthAdjust="spacingAndGlyphs">144.540</text>
<text x="683.600" y="50" textLength="31.8" lengthAdjust="spacingAndGlyphs">115.090</text>
<text x="683.600" y="83" textLength="31.8" lengthAdjust="spacingAndGlyphs">114.950</text>
<text x="683.600" y="116" textLength="31.8" lengthAdjust="spacingAndGlyphs">114.810</text>
<text x="683.600" y="149" textLength="31.8" lengthAdjust="spacingAndGlyphs">114.670</text>
<text x="683.600" y="182" textLength="31.8" lengthAdjust="spacingAndGlyphs">114.530</text>
<text x="683.600" y="216" textLength="31.8" lengthAdjust="spacingAndGlyphs">114.390</text>
<text x="683.600" y="249" textLength="31.8" lengthAdjust="spacingAndGlyphs">114.250</text>
<text x="683.600" y="282" textLength="31.8" lengthAdjust="spacingAndGlyphs">114.110</text>
<text x="683.600" y="315" textLength="31.8" lengthAdjust="spacingAndGlyphs">113.970</text>
<text x="683.600" y="348" textLength="31.8" lengthAdjust="spacingAndGlyphs">113.830</text>
<text x="683.600" y="381" textLength="31.8" lengthAdjust="spacingAndGlyphs">113.690</text>
<text x="681.500" y="393">1</text>
<text x="680.500" y="438" textLength="12.200" lengthAdjust="spacingAndGlyphs">0.7</text>
<text x="680.500" y="472" textLength="12.200" lengthAdjust="spacingAndGlyphs">0.5</text>
<text x="680.500" y="506" textLength="12.200" lengthAdjust="spacingAndGlyphs">0.3</text>
<text x="681" y="550">0</text>
<text x="16.600" y="395" textLength="61" lengthAdjust="spacingAndGlyphs">DeM(9) 0.3772</text>
<text x="11.6" y="566" textLength="49.4" lengthAdjust="spacingAndGlyphs">14 Jan 2022</text>
<text x="75.6" y="566" textLength="52.9" lengthAdjust="spacingAndGlyphs">17 Jan 02:00</text>
<text x="139.6" y="566" textLength="52.9" lengthAdjust="spacingAndGlyphs">17 Jan 10:00</text>
<text x="203.6" y="566" textLength="52.9" lengthAdjust="spacingAndGlyphs">17 Jan 18:00</text>
<text x="267.6" y="566" textLength="52.9" lengthAdjust="spacingAndGlyphs">18 Jan 02:00</text>
<text x="331.6" y="566" textLength="52.9" lengthAdjust="spacingAndGlyphs">18 Jan 10:00</text>
<text x="395.6" y="566" textLength="52.9" lengthAdjust="spacingAndGlyphs">18 Jan 18:00</text>
<text x="459.6" y="566" textLength="52.9" lengthAdjust="spacingAndGlyphs">19 Jan 02:00</text>
<text x="523.6" y="566" textLength="52.9" lengthAdjust="spacingAndGlyphs">19 Jan 10:00</text>
<text x="587.6" y="566" textLength="52.9" lengthAdjust="spacingAndGlyphs">19 Jan 18:00</text>
<text x="651.6" y="566" textLength="52.9" lengthAdjust="spacingAndGlyphs">20 Jan 02:00</text>
</g>
</svg>
</body></html>
